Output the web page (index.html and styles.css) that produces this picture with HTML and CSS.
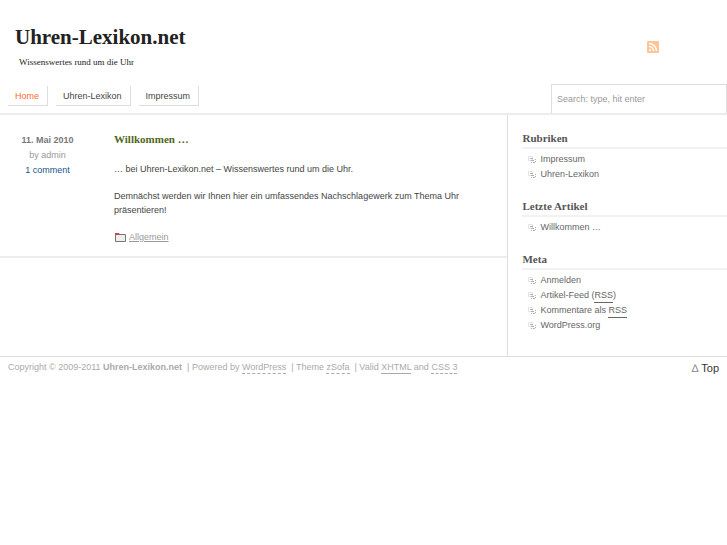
FILE: index.html
```html
<!DOCTYPE html>
<html lang="de">
<head>
  <meta charset="UTF-8">
  <meta name="viewport" content="width=device-width, initial-scale=1.0">
  <title>Uhren-Lexikon.net</title>
  <link rel="stylesheet" href="styles.css">
</head>
<body id="top">

  <svg class="sprite" aria-hidden="true">
    <symbol id="bullet" viewBox="0 0 8 8">
      <path d="M0.5 0.5h4v4h-4z" fill="none" stroke="#e2e2e2"/>
      <path d="M2 2.5h3M3 4.5h3M7.5 3v1M7.5 5v1M3 6.5h1M5 6.5h2" fill="none" stroke="#b0b0b0"/>
    </symbol>
  </svg>

  <header class="header">
    <div class="branding">
      <div>
        <h1><a href="#">Uhren-Lexikon.net</a></h1>
        <p class="tagline">Wissenswertes rund um die Uhr</p>
      </div>
      <a class="feed" href="#" aria-label="RSS Feed">
        <svg width="12" height="12" viewBox="0 0 12 12">
          <rect width="12" height="12" rx="1" fill="#ffc596"/>
          <path d="M2 2.5a7.5 7.5 0 0 1 7.5 7.5M2 5.5a4.5 4.5 0 0 1 4.5 4.5" fill="none" stroke="#fff" stroke-width="1.4"/>
          <circle cx="3" cy="9" r="1.1" fill="#fff"/>
        </svg>
      </a>
    </div>
    <div class="bar">
      <nav class="nav">
        <a class="current" href="#">Home</a>
        <a href="#">Uhren-Lexikon</a>
        <a href="#">Impressum</a>
      </nav>
      <form class="search">
        <input type="text" placeholder="Search: type, hit enter" aria-label="Search">
      </form>
    </div>
  </header>

  <div class="content">
    <main class="main">
      <article class="post">
        <div class="meta">
          <strong>11. Mai 2010</strong>
          <span>by admin</span>
          <a href="#">1 comment</a>
        </div>
        <div class="entry">
          <h2><a href="#">Willkommen …</a></h2>
          <p>… bei Uhren-Lexikon.net – Wissenswertes rund um die Uhr.</p>
          <p>Demnächst werden wir Ihnen hier ein umfassendes Nachschlagewerk zum Thema Uhr präsentieren!</p>
          <p class="category">
            <svg width="11" height="9" viewBox="0 0 11 9">
              <path d="M0.5 1.5h10v7h-10z" fill="#eee" stroke="#777"/>
              <path d="M0 0h4l1 2H0z" fill="#c8474a"/>
            </svg>
            <a href="#">Allgemein</a>
          </p>
        </div>
      </article>
    </main>

    <aside class="sidebar">
      <section>
        <h3>Rubriken</h3>
        <ul>
          <li><svg><use href="#bullet"/></svg><a href="#">Impressum</a></li>
          <li><svg><use href="#bullet"/></svg><a href="#">Uhren-Lexikon</a></li>
        </ul>
      </section>
      <section>
        <h3>Letzte Artikel</h3>
        <ul>
          <li><svg><use href="#bullet"/></svg><a href="#">Willkommen …</a></li>
        </ul>
      </section>
      <section>
        <h3>Meta</h3>
        <ul>
          <li><svg><use href="#bullet"/></svg><a href="#">Anmelden</a></li>
          <li><svg><use href="#bullet"/></svg><a href="#">Artikel-Feed (<abbr>RSS</abbr>)</a></li>
          <li><svg><use href="#bullet"/></svg><a href="#">Kommentare als <abbr>RSS</abbr></a></li>
          <li><svg><use href="#bullet"/></svg><a href="#">WordPress.org</a></li>
        </ul>
      </section>
    </aside>
  </div>

  <footer class="footer">
    <p>Copyright © 2009-2011 <strong>Uhren-Lexikon.net</strong> &nbsp;| Powered by <a href="#">WordPress</a> &nbsp;| Theme <a href="#">zSofa</a> &nbsp;| Valid <a class="solid" href="#">XHTML</a> and <a href="#">CSS 3</a></p>
    <a class="to-top" href="#top"><span>∆</span> Top</a>
  </footer>

</body>
</html>
```
FILE: styles.css
```css
* {
  margin: 0;
  padding: 0;
  box-sizing: border-box;
}

body {
  background: #fff;
  color: #444;
  font: 9px/14px "Liberation Sans", Arial, sans-serif;
}

a {
  color: inherit;
  text-decoration: none;
}

.sprite {
  display: none;
}

/* Header */
.header {
  border-bottom: 2px solid #ececec;
}

.branding {
  display: flex;
  justify-content: space-between;
  align-items: center;
  padding: 24px 68px 14px 15px;
}

h1 {
  color: #222;
  font: bold 21px/26px "Liberation Serif", "Times New Roman", serif;
}

.tagline {
  margin: 5px 0 0 4px;
  color: #222;
  font: 9px/15px "Liberation Serif", "Times New Roman", serif;
}

.feed svg {
  display: block;
}

.bar {
  display: flex;
  justify-content: space-between;
  align-items: flex-start;
}

.nav {
  display: flex;
  gap: 8px;
  padding: 2px 0 0 8px;
}

.nav a {
  padding: 3px 8px 2px 7px;
  border-right: 1px solid #ddd;
  border-bottom: 1px solid #ddd;
}

.nav .current {
  color: #ff6c2c;
}

.search {
  width: 176px;
}

.search input {
  display: block;
  width: 100%;
  height: 29px;
  padding: 0 5px;
  border: 1px solid #ddd;
  border-bottom: 0;
  font: inherit;
}

.search input::placeholder {
  color: #999;
}

/* Content */
.content {
  display: flex;
  border-bottom: 1px solid #ddd;
}

.main {
  flex: 1;
}

.post {
  display: flex;
  gap: 19px;
  padding: 16px 16px 12px 0;
  border-bottom: 2px solid #ececec;
}

.meta {
  display: flex;
  flex-direction: column;
  align-items: center;
  width: 95px;
  padding-top: 2px;
  color: #999;
  line-height: 15px;
}

.meta strong {
  color: #777;
}

.meta a {
  color: #1a5488;
}

.entry {
  flex: 1;
}

.entry h2 {
  margin-bottom: 15px;
  color: #4d6a1a;
  font: bold 11px/16px "Liberation Serif", "Times New Roman", serif;
}

.entry p + p {
  margin-top: 13px;
}

.category {
  display: flex;
  align-items: center;
  gap: 3px;
  padding-left: 1px;
  color: #999;
}

.category a {
  text-decoration: underline;
}

/* Sidebar */
.sidebar {
  width: 30.2%;
  padding: 15px 0 7px 14px;
  border-left: 1px solid #ddd;
}

.sidebar section {
  margin-bottom: 16px;
}

.sidebar h3 {
  margin-bottom: 3px;
  padding-bottom: 1px;
  border-bottom: 2px solid #f2f2f2;
  color: #555;
  font: bold 11px/16px "Liberation Serif", "Times New Roman", serif;
}

.sidebar ul {
  list-style: none;
}

.sidebar li {
  display: flex;
  align-items: center;
  gap: 4px;
  padding-left: 6px;
  color: #666;
  line-height: 15px;
}

.sidebar li svg {
  width: 8px;
  height: 8px;
}

.sidebar abbr {
  padding-bottom: 2px;
  border-bottom: 1px solid #666;
}

/* Footer */
.footer {
  display: flex;
  justify-content: space-between;
  padding: 3px 8px;
  color: #aaa;
}

.footer p a {
  padding-bottom: 1px;
  border-bottom: 1px dashed #aaa;
}

.footer p .solid {
  border-bottom-style: solid;
}

.to-top {
  color: #333;
  font-size: 11px;
  line-height: 16px;
}

.to-top span {
  color: #888;
}
```
